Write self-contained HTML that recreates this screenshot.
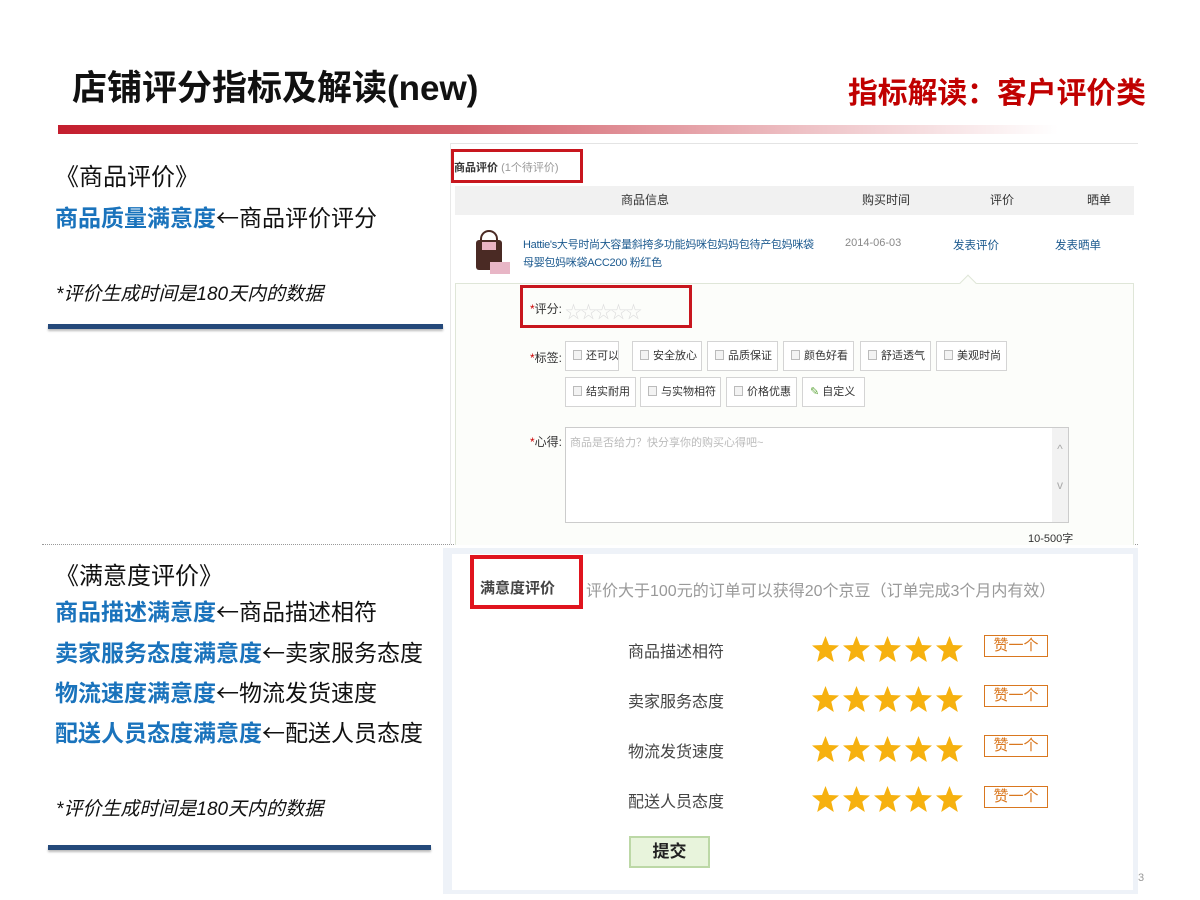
<!DOCTYPE html>
<html><head><meta charset="utf-8">
<style>
*{margin:0;padding:0;box-sizing:border-box}
body{width:1200px;height:900px;background:#fff;position:relative;overflow:hidden;font-family:"Liberation Sans","Noto Sans CJK SC",sans-serif}
.a{position:absolute;white-space:nowrap}
.b{color:#1a73bc;font-weight:bold}
.ar{font-family:"Noto Sans CJK SC",sans-serif}
.zan{position:absolute;left:984px;width:64px;height:22px;border:1px solid #d9771f;color:#d9771f;font-size:15px;line-height:20px;text-align:center;background:#fff}
.lab{position:absolute;left:628px;font-size:16px;color:#444}
.tag{position:absolute;height:30px;border:1px solid #d4d4d4;background:#fff;font-size:11px;color:#333;line-height:28px;padding-left:7px;white-space:nowrap;overflow:hidden}
.tag i{display:inline-block;width:9px;height:10px;border:1px solid #bbb;background:#f3f3f3;margin-right:4px;vertical-align:-1px}
.ln{position:absolute;left:55px;font-size:23px;color:#111;height:30px;line-height:30px;white-space:nowrap}
</style></head><body>

<div class="a" style="left:72px;top:60px;font-size:35px;font-weight:bold;color:#111">店铺评分指标及解读(new)</div>
<div class="a" style="left:848px;top:68px;font-size:29.8px;font-weight:bold;color:#c00000">指标解读：客户评价类</div>
<div class="a" style="left:58px;top:125px;width:1000px;height:9px;background:linear-gradient(90deg,#c41e2e 0%,#d3606a 40%,#eec2c6 75%,#fff 100%)"></div>

<div class="a" style="left:55px;top:157px;font-size:24px;color:#111">《商品评价》</div>
<div class="ln" style="top:201px"><span class="b">商品质量满意度</span><span class="ar">←</span>商品评价评分</div>
<div class="a" style="left:56px;top:279px;font-size:19px;color:#111;font-style:italic">*评价生成时间是180天内的数据</div>
<div class="a" style="left:48px;top:324px;width:395px;height:5px;background:#24497a;box-shadow:0 2px 2px #bbb"></div>

<div class="a" style="left:42px;top:544px;width:1096px;border-top:1px dotted #999"></div>

<div class="a" style="left:55px;top:556px;font-size:24px;color:#111">《满意度评价》</div>
<div class="ln" style="top:595px"><span class="b">商品描述满意度</span><span class="ar">←</span>商品描述相符</div>
<div class="ln" style="top:636px"><span class="b">卖家服务态度满意度</span><span class="ar">←</span>卖家服务态度</div>
<div class="ln" style="top:676px"><span class="b">物流速度满意度</span><span class="ar">←</span>物流发货速度</div>
<div class="ln" style="top:716px"><span class="b">配送人员态度满意度</span><span class="ar">←</span>配送人员态度</div>
<div class="a" style="left:56px;top:794px;font-size:19px;color:#111;font-style:italic">*评价生成时间是180天内的数据</div>
<div class="a" style="left:48px;top:845px;width:383px;height:5px;background:#24497a;box-shadow:0 2px 2px #bbb"></div>

<div class="a" style="left:450px;top:143px;width:688px;border-top:1px solid #e4e4e4"></div>
<div class="a" style="left:450px;top:143px;width:1px;height:401px;background:#e8e8e8"></div>
<div class="a" style="left:454px;top:159px;font-size:11px;color:#333;font-weight:bold">商品评价 <span style="font-weight:normal;color:#999">(1个待评价)</span></div>
<div class="a" style="left:451px;top:149px;width:132px;height:34px;border:3px solid #c8161e"></div>
<div class="a" style="left:455px;top:186px;width:679px;height:29px;background:#f1f1f1;font-size:12px;color:#333;line-height:29px">
<span class="a" style="left:166px">商品信息</span><span class="a" style="left:407px">购买时间</span><span class="a" style="left:535px">评价</span><span class="a" style="left:632px">晒单</span></div>
<div class="a" style="left:455px;top:215px;width:679px;height:68px;background:#fff"></div>
<div class="a" style="left:472px;top:230px;width:40px;height:46px">
<div style="position:absolute;left:4px;top:10px;width:26px;height:30px;background:#4a2a24;border-radius:3px"></div>
<div style="position:absolute;left:10px;top:12px;width:14px;height:8px;background:#e9b3c3"></div>
<div style="position:absolute;left:18px;top:32px;width:20px;height:12px;background:#e8b6c6"></div>
<div style="position:absolute;left:8px;top:0;width:18px;height:14px;border:2px solid #4a2a24;border-bottom:none;border-radius:9px 9px 0 0"></div></div>
<div class="a" style="left:523px;top:236px;font-size:11px;color:#1c5a8f;line-height:18px;letter-spacing:-0.3px">Hattie's大号时尚大容量斜挎多功能妈咪包妈妈包待产包妈咪袋<br>母婴包妈咪袋ACC200 粉红色</div>
<div class="a" style="left:845px;top:237px;font-size:11px;color:#888">2014-06-03</div>
<div class="a" style="left:953px;top:237px;font-size:11.5px;color:#1c5a8f">发表评价</div>
<div class="a" style="left:1055px;top:237px;font-size:11.5px;color:#1c5a8f">发表晒单</div>
<div class="a" style="left:455px;top:283px;width:679px;height:262px;background:#fcfdfa;border:1px solid #dfe6d8;border-bottom:none"></div>
<div class="a" style="left:962px;top:277px;width:12px;height:12px;background:#fcfdfa;border-left:1px solid #dfe6d8;border-top:1px solid #dfe6d8;transform:rotate(45deg)"></div>
<div class="a" style="left:530px;top:300px;font-size:12px;color:#333"><span style="color:#c00">*</span>评分:</div>
<div class="a" style="left:565px;top:298px;font-size:17px;color:#ddd;letter-spacing:-2px">☆☆☆☆☆</div>
<div class="a" style="left:520px;top:285px;width:172px;height:43px;border:3px solid #c8161e"></div>
<div class="a" style="left:530px;top:349px;font-size:12px;color:#333"><span style="color:#c00">*</span>标签:</div>
<div class="tag" style="left:565px;top:341px;width:54px"><i></i>还可以</div>
<div class="tag" style="left:632px;top:341px;width:70px"><i></i>安全放心</div>
<div class="tag" style="left:707px;top:341px;width:71px"><i></i>品质保证</div>
<div class="tag" style="left:783px;top:341px;width:71px"><i></i>颜色好看</div>
<div class="tag" style="left:860px;top:341px;width:71px"><i></i>舒适透气</div>
<div class="tag" style="left:936px;top:341px;width:71px"><i></i>美观时尚</div>
<div class="tag" style="left:565px;top:377px;width:71px"><i></i>结实耐用</div>
<div class="tag" style="left:640px;top:377px;width:81px"><i></i>与实物相符</div>
<div class="tag" style="left:726px;top:377px;width:71px"><i></i>价格优惠</div>
<div class="tag" style="left:802px;top:377px;width:63px"><span style="color:#6a4">✎</span> 自定义</div>
<div class="a" style="left:530px;top:433px;font-size:12px;color:#333"><span style="color:#c00">*</span>心得:</div>
<div class="a" style="left:565px;top:427px;width:504px;height:96px;border:1px solid #ccc;background:#fff;font-size:11px;color:#bbb;padding:6px 4px">商品是否给力？快分享你的购买心得吧~
<div style="position:absolute;right:0;top:0;width:16px;height:94px;background:#f2f2f2;color:#aaa;font-size:12px;text-align:center;line-height:18px;padding-top:12px">^<br><br>v</div></div>
<div class="a" style="left:1028px;top:530px;font-size:11px;color:#333">10-500字</div>

<div class="a" style="left:443px;top:548px;width:695px;height:346px;background:#eef2f8"></div>
<div class="a" style="left:452px;top:554px;width:681px;height:336px;background:#fff"></div>
<div class="a" style="left:480px;top:577px;font-size:15px;font-weight:bold;color:#444">满意度评价</div>
<div class="a" style="left:586px;top:577px;font-size:16px;color:#999">评价大于100元的订单可以获得20个京豆（订单完成3个月内有效）</div>
<div class="a" style="left:470px;top:555px;width:113px;height:54px;border:4px solid #e0141e"></div>

<div class="lab" style="top:638px">商品描述相符</div>
<div class="lab" style="top:688px">卖家服务态度</div>
<div class="lab" style="top:738px">物流发货速度</div>
<div class="lab" style="top:788px">配送人员态度</div>
<svg class="a" style="left:810px;top:633px" width="160" height="180" viewBox="0 0 160 180">
<defs><path id="s" d="M13.5 0 L17 9 L27 9.5 L19.3 15.8 L21.8 26 L13.5 20.5 L5.2 26 L7.7 15.8 L0 9.5 L10 9 Z" fill="#f6b10f"/></defs>
<g><use href="#s" x="2" y="3"/><use href="#s" x="33" y="3"/><use href="#s" x="64" y="3"/><use href="#s" x="95" y="3"/><use href="#s" x="126" y="3"/></g>
<g transform="translate(0,50)"><use href="#s" x="2" y="3"/><use href="#s" x="33" y="3"/><use href="#s" x="64" y="3"/><use href="#s" x="95" y="3"/><use href="#s" x="126" y="3"/></g>
<g transform="translate(0,100)"><use href="#s" x="2" y="3"/><use href="#s" x="33" y="3"/><use href="#s" x="64" y="3"/><use href="#s" x="95" y="3"/><use href="#s" x="126" y="3"/></g>
<g transform="translate(0,150)"><use href="#s" x="2" y="3"/><use href="#s" x="33" y="3"/><use href="#s" x="64" y="3"/><use href="#s" x="95" y="3"/><use href="#s" x="126" y="3"/></g>
</svg>
<div class="zan" style="top:635px">赞一个</div>
<div class="zan" style="top:685px">赞一个</div>
<div class="zan" style="top:735px">赞一个</div>
<div class="zan" style="top:786px">赞一个</div>
<div class="a" style="left:629px;top:836px;width:81px;height:32px;background:#e8f4dc;border:2px solid #bcd8a6;font-size:17px;font-weight:bold;color:#222;text-align:center;line-height:28px">提交</div>
<div class="a" style="left:1138px;top:872px;font-size:11px;color:#999">3</div>
</body></html>
